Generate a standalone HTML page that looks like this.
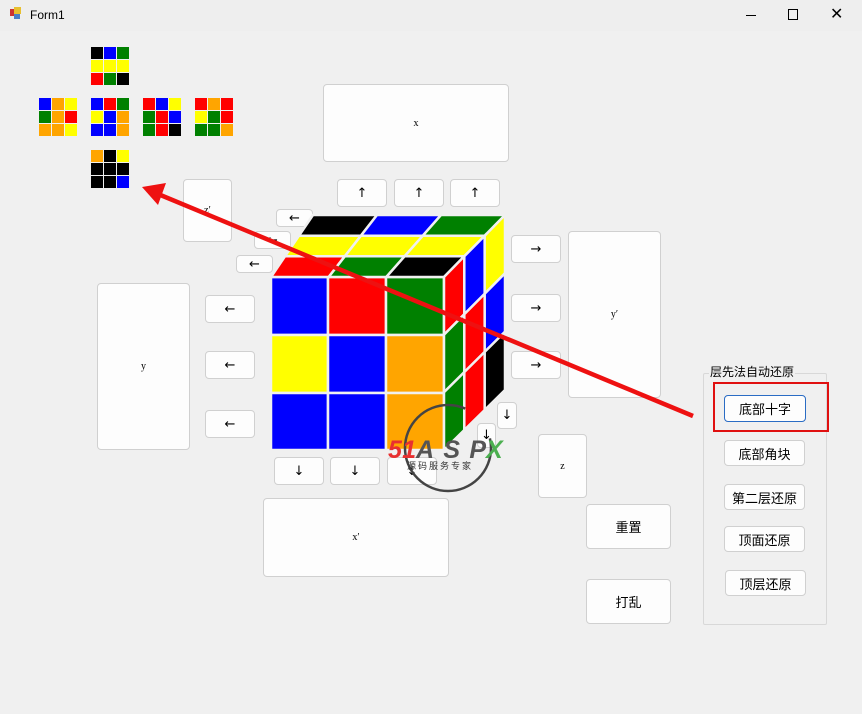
<!DOCTYPE html>
<html><head><meta charset="utf-8"><style>
*{margin:0;padding:0;box-sizing:border-box}
body{width:862px;height:714px;background:#f0f0f0;position:relative;overflow:hidden;font-family:"Liberation Sans","Noto Sans CJK SC",sans-serif;}
.tb{position:absolute;left:0;top:0;width:862px;height:31px;background:#eeeeee;}
.b{position:absolute;background:#fdfdfd;border:1px solid #d0d0d0;border-radius:4px;display:flex;align-items:center;justify-content:center;font-size:10px;color:#000;font-family:"Liberation Serif",serif;}
.a{font-size:13px;font-family:"DejaVu Sans",sans-serif;}
.c{font-family:"Liberation Sans","Noto Sans CJK SC",sans-serif;font-size:13px;}
.n{position:absolute;display:grid;grid-template-columns:repeat(3,12px);grid-gap:1px;}
.n i{display:block;width:12px;height:12px}
.K{background:#000}.B{background:#0000ff}.G{background:#008000}.Y{background:#ffff00}.R{background:#ff0000}.O{background:#ffa500}
svg{position:absolute;left:0;top:0}
</style></head><body>
<div class="tb">
<div style="position:absolute;left:10px;top:9px;width:6px;height:7px;background:#c33"></div>
<div style="position:absolute;left:14px;top:7px;width:7px;height:7px;background:#e8c030"></div>
<div style="position:absolute;left:14px;top:14px;width:6px;height:5px;background:#4a7fc8"></div>
<div style="position:absolute;left:30px;top:8px;font-size:12px;color:#000">Form1</div>
<div style="position:absolute;left:746px;top:15px;width:10px;height:1px;background:#000"></div>
<div style="position:absolute;left:788px;top:9px;width:10px;height:11px;border:1px solid #000"></div>
<div style="position:absolute;left:830px;top:4px;font-size:16px;color:#000">✕</div>
</div>

<div class="n" style="left:91px;top:47px"><i class="K"></i><i class="B"></i><i class="G"></i><i class="Y"></i><i class="Y"></i><i class="Y"></i><i class="R"></i><i class="G"></i><i class="K"></i></div>
<div class="n" style="left:39px;top:98px"><i class="B"></i><i class="O"></i><i class="Y"></i><i class="G"></i><i class="O"></i><i class="R"></i><i class="O"></i><i class="O"></i><i class="Y"></i></div>
<div class="n" style="left:91px;top:98px"><i class="B"></i><i class="R"></i><i class="G"></i><i class="Y"></i><i class="B"></i><i class="O"></i><i class="B"></i><i class="B"></i><i class="O"></i></div>
<div class="n" style="left:143px;top:98px"><i class="R"></i><i class="B"></i><i class="Y"></i><i class="G"></i><i class="R"></i><i class="B"></i><i class="G"></i><i class="R"></i><i class="K"></i></div>
<div class="n" style="left:195px;top:98px"><i class="R"></i><i class="O"></i><i class="R"></i><i class="Y"></i><i class="G"></i><i class="R"></i><i class="G"></i><i class="G"></i><i class="O"></i></div>
<div class="n" style="left:91px;top:150px"><i class="O"></i><i class="K"></i><i class="Y"></i><i class="K"></i><i class="K"></i><i class="K"></i><i class="K"></i><i class="K"></i><i class="B"></i></div>

<div class="b" style="left:323px;top:84px;width:186px;height:78px">x</div>
<div class="b" style="left:183px;top:179px;width:49px;height:63px">z′</div>
<div class="b a" style="left:276px;top:209px;width:37px;height:18px">←</div>
<div class="b a" style="left:254px;top:231px;width:37px;height:18px">←</div>
<div class="b a" style="left:236px;top:255px;width:37px;height:18px">←</div>
<div class="b a" style="left:337px;top:179px;width:50px;height:28px">↑</div>
<div class="b a" style="left:394px;top:179px;width:50px;height:28px">↑</div>
<div class="b a" style="left:450px;top:179px;width:50px;height:28px">↑</div>
<div class="b" style="left:97px;top:283px;width:93px;height:167px">y</div>
<div class="b a" style="left:205px;top:295px;width:50px;height:28px">←</div>
<div class="b a" style="left:205px;top:351px;width:50px;height:28px">←</div>
<div class="b a" style="left:205px;top:410px;width:50px;height:28px">←</div>
<div class="b a" style="left:511px;top:235px;width:50px;height:28px">→</div>
<div class="b a" style="left:511px;top:294px;width:50px;height:28px">→</div>
<div class="b a" style="left:511px;top:351px;width:50px;height:28px">→</div>
<div class="b" style="left:568px;top:231px;width:93px;height:167px">y′</div>
<div class="b a" style="left:497px;top:402px;width:20px;height:27px">↓</div>
<div class="b a" style="left:477px;top:423px;width:19px;height:25px">↓</div>
<div class="b a" style="left:274px;top:457px;width:50px;height:28px">↓</div>
<div class="b a" style="left:330px;top:457px;width:50px;height:28px">↓</div>
<div class="b a" style="left:387px;top:457px;width:50px;height:28px">↓</div>
<div class="b" style="left:263px;top:498px;width:186px;height:79px">x′</div>
<div class="b" style="left:538px;top:434px;width:49px;height:64px">z</div>
<div class="b c" style="left:586px;top:504px;width:85px;height:45px">重置</div>
<div class="b c" style="left:586px;top:579px;width:85px;height:45px">打乱</div>

<div style="position:absolute;left:703px;top:373px;width:124px;height:252px;border:1px solid #d8d8d8;border-radius:2px"></div>
<div class="c" style="position:absolute;left:709px;top:363px;background:#f0f0f0;font-size:12px;padding:0 1px">层先法自动还原</div>
<div class="b c" style="left:724px;top:395px;width:82px;height:27px;border-color:#2a6cc4;font-size:13px">底部十字</div>
<div class="b c" style="left:724px;top:440px;width:81px;height:26px">底部角块</div>
<div class="b c" style="left:724px;top:484px;width:81px;height:26px">第二层还原</div>
<div class="b c" style="left:724px;top:526px;width:81px;height:26px">顶面还原</div>
<div class="b c" style="left:725px;top:570px;width:81px;height:26px">顶层还原</div>
<div style="position:absolute;left:713px;top:382px;width:116px;height:50px;border:2px solid #e01010"></div>

<svg width="862" height="714" viewBox="0 0 862 714">
<g stroke="#f0f0f0" stroke-width="2.5" stroke-linejoin="miter">
<rect x="271" y="277" width="57" height="58" fill="#0000ff"/>
<rect x="328" y="277" width="58" height="58" fill="#ff0000"/>
<rect x="386" y="277" width="58" height="58" fill="#008000"/>
<rect x="271" y="335" width="57" height="58" fill="#ffff00"/>
<rect x="328" y="335" width="58" height="58" fill="#0000ff"/>
<rect x="386" y="335" width="58" height="58" fill="#ffa500"/>
<rect x="271" y="393" width="57" height="57" fill="#0000ff"/>
<rect x="328" y="393" width="58" height="57" fill="#0000ff"/>
<rect x="386" y="393" width="58" height="57" fill="#ffa500"/>
<polygon points="271,277 328.7,277 344.8,256.3 285,256.3" fill="#ff0000"/>
<polygon points="328.7,277 386.3,277 404.6,256.3 344.8,256.3" fill="#008000"/>
<polygon points="386.3,277 444,277 464.3,256.3 404.6,256.3" fill="#000"/>
<polygon points="285,256.3 344.8,256.3 360.9,235.7 299,235.7" fill="#ffff00"/>
<polygon points="344.8,256.3 404.6,256.3 422.8,235.7 360.9,235.7" fill="#ffff00"/>
<polygon points="404.6,256.3 464.3,256.3 484.7,235.7 422.8,235.7" fill="#ffff00"/>
<polygon points="299,235.7 360.9,235.7 377,215 313,215" fill="#000"/>
<polygon points="360.9,235.7 422.8,235.7 441,215 377,215" fill="#0000ff"/>
<polygon points="422.8,235.7 484.7,235.7 505,215 441,215" fill="#008000"/>
<polygon points="444,277 464.3,256.3 464.3,314.2 444,334.7" fill="#ff0000"/>
<polygon points="444,334.7 464.3,314.2 464.3,372.1 444,392.3" fill="#008000"/>
<polygon points="444,392.3 464.3,372.1 464.3,430 444,450" fill="#008000"/>
<polygon points="464.3,256.3 484.7,235.7 484.7,293.8 464.3,314.2" fill="#0000ff"/>
<polygon points="464.3,314.2 484.7,293.8 484.7,351.9 464.3,372.1" fill="#ff0000"/>
<polygon points="464.3,372.1 484.7,351.9 484.7,410 464.3,430" fill="#ff0000"/>
<polygon points="484.7,235.7 505,215 505,273.3 484.7,293.8" fill="#ffff00"/>
<polygon points="484.7,293.8 505,273.3 505,331.7 484.7,351.9" fill="#0000ff"/>
<polygon points="484.7,351.9 505,331.7 505,390 484.7,410" fill="#000"/>
</g>
<circle cx="448" cy="448" r="43" fill="none" stroke="#444" stroke-width="2.5" stroke-dasharray="220 40"/>
<text x="388" y="458" font-family="Liberation Sans,sans-serif" font-style="italic" font-weight="bold" font-size="25" fill="#e83030" textLength="28">51</text>
<text x="416" y="458" font-family="Liberation Sans,sans-serif" font-style="italic" font-weight="bold" font-size="25" fill="#555" textLength="70">ASP</text>
<text x="486" y="458" font-family="Liberation Sans,sans-serif" font-style="italic" font-weight="bold" font-size="25" fill="#4caf50">X</text>
<text x="407" y="469" font-family="Noto Sans CJK SC,sans-serif" font-size="9" fill="#333" letter-spacing="2">源码服务专家</text>
<line x1="693" y1="416" x2="158" y2="194" stroke="#ee1111" stroke-width="4.5"/>
<polygon points="142,187 166,183 158,205" fill="#ee1111"/>
</svg>
</body></html>
